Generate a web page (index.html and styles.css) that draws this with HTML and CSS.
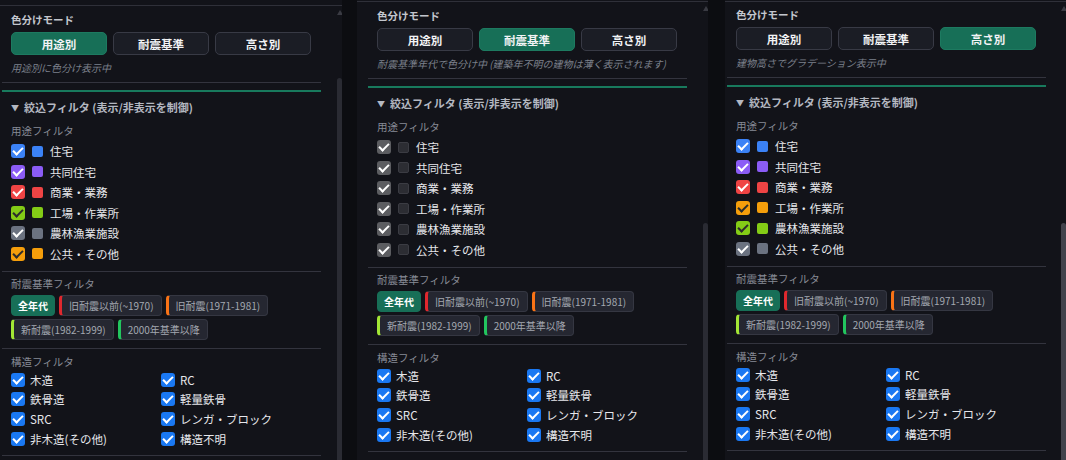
FILE: index.html
```html
<!DOCTYPE html>
<html lang="ja">
<head>
  <meta charset="UTF-8">
  <title>色分けモード</title>
  <link rel="stylesheet" href="styles.css">
</head>
<body>
  <div class="screens">

    <!-- 用途別 -->
    <div class="panel p1">
      <div class="topline"></div>
      <div class="scroll">
        <div class="body">
          <div class="inner">
            <div class="label">色分けモード</div>
            <div class="modes">
              <button class="mode active">用途別</button>
              <button class="mode">耐震基準</button>
              <button class="mode">高さ別</button>
            </div>
            <p class="hint">用途別に色分け表示中</p>
            <div class="rule"></div>
            <div class="accent"></div>
            <div class="summary"><span class="tri">▼</span>絞込フィルタ (表示/非表示を制御)</div>
            <div class="sub">用途フィルタ</div>
            <ul class="uses">
              <li><span class="cb c-blue"></span><span class="sw c-blue"></span>住宅</li>
              <li><span class="cb c-purple"></span><span class="sw c-purple"></span>共同住宅</li>
              <li><span class="cb c-red"></span><span class="sw c-red"></span>商業・業務</li>
              <li><span class="cb c-lime dark"></span><span class="sw c-lime"></span>工場・作業所</li>
              <li><span class="cb c-grey"></span><span class="sw c-grey"></span>農林漁業施設</li>
              <li><span class="cb c-orange dark"></span><span class="sw c-orange"></span>公共・その他</li>
            </ul>
            <div class="rule"></div>
            <div class="sub">耐震基準フィルタ</div>
            <div class="pills">
              <span class="pill all">全年代</span>
              <span class="pill b-red">旧耐震以前(~1970)</span>
              <span class="pill b-orange">旧耐震(1971-1981)</span>
              <span class="pill b-lime">新耐震(1982-1999)</span>
              <span class="pill b-green">2000年基準以降</span>
            </div>
            <div class="rule"></div>
            <div class="sub">構造フィルタ</div>
            <ul class="structs">
              <li><span class="cb c-acc"></span>木造</li>
              <li><span class="cb c-acc"></span>RC</li>
              <li><span class="cb c-acc"></span>鉄骨造</li>
              <li><span class="cb c-acc"></span>軽量鉄骨</li>
              <li><span class="cb c-acc"></span>SRC</li>
              <li><span class="cb c-acc"></span>レンガ・ブロック</li>
              <li><span class="cb c-acc"></span>非木造(その他)</li>
              <li><span class="cb c-acc"></span>構造不明</li>
            </ul>
            <div class="rule"></div>
          </div>
        </div>
        <div class="bar"><div class="arrow"></div><div class="thumb"></div></div>
      </div>
    </div>

    <!-- 耐震基準 -->
    <div class="panel p2">
      <div class="topline"></div>
      <div class="scroll">
        <div class="body">
          <div class="inner">
            <div class="label">色分けモード</div>
            <div class="modes">
              <button class="mode">用途別</button>
              <button class="mode active">耐震基準</button>
              <button class="mode">高さ別</button>
            </div>
            <p class="hint">耐震基準年代で色分け中 (建築年不明の建物は薄く表示されます)</p>
            <div class="rule"></div>
            <div class="accent"></div>
            <div class="summary"><span class="tri">▼</span>絞込フィルタ (表示/非表示を制御)</div>
            <div class="sub">用途フィルタ</div>
            <ul class="uses">
              <li><span class="cb c-muted"></span><span class="sw off"></span>住宅</li>
              <li><span class="cb c-muted"></span><span class="sw off"></span>共同住宅</li>
              <li><span class="cb c-muted"></span><span class="sw off"></span>商業・業務</li>
              <li><span class="cb c-muted"></span><span class="sw off"></span>工場・作業所</li>
              <li><span class="cb c-muted"></span><span class="sw off"></span>農林漁業施設</li>
              <li><span class="cb c-muted"></span><span class="sw off"></span>公共・その他</li>
            </ul>
            <div class="rule"></div>
            <div class="sub">耐震基準フィルタ</div>
            <div class="pills">
              <span class="pill all">全年代</span>
              <span class="pill b-red">旧耐震以前(~1970)</span>
              <span class="pill b-orange">旧耐震(1971-1981)</span>
              <span class="pill b-lime">新耐震(1982-1999)</span>
              <span class="pill b-green">2000年基準以降</span>
            </div>
            <div class="rule"></div>
            <div class="sub">構造フィルタ</div>
            <ul class="structs">
              <li><span class="cb c-acc"></span>木造</li>
              <li><span class="cb c-acc"></span>RC</li>
              <li><span class="cb c-acc"></span>鉄骨造</li>
              <li><span class="cb c-acc"></span>軽量鉄骨</li>
              <li><span class="cb c-acc"></span>SRC</li>
              <li><span class="cb c-acc"></span>レンガ・ブロック</li>
              <li><span class="cb c-acc"></span>非木造(その他)</li>
              <li><span class="cb c-acc"></span>構造不明</li>
            </ul>
            <div class="rule"></div>
          </div>
        </div>
        <div class="bar"><div class="arrow"></div><div class="thumb"></div></div>
      </div>
    </div>

    <!-- 高さ別 -->
    <div class="panel p3">
      <div class="topline"></div>
      <div class="scroll">
        <div class="body">
          <div class="inner">
            <div class="label">色分けモード</div>
            <div class="modes">
              <button class="mode">用途別</button>
              <button class="mode">耐震基準</button>
              <button class="mode active">高さ別</button>
            </div>
            <p class="hint">建物高さでグラデーション表示中</p>
            <div class="rule"></div>
            <div class="accent"></div>
            <div class="summary"><span class="tri">▼</span>絞込フィルタ (表示/非表示を制御)</div>
            <div class="sub">用途フィルタ</div>
            <ul class="uses">
              <li><span class="cb c-blue"></span><span class="sw c-blue"></span>住宅</li>
              <li><span class="cb c-purple"></span><span class="sw c-purple"></span>共同住宅</li>
              <li><span class="cb c-red"></span><span class="sw c-red"></span>商業・業務</li>
              <li><span class="cb c-orange dark"></span><span class="sw c-orange"></span>工場・作業所</li>
              <li><span class="cb c-lime dark"></span><span class="sw c-lime"></span>農林漁業施設</li>
              <li><span class="cb c-grey"></span><span class="sw c-grey"></span>公共・その他</li>
            </ul>
            <div class="rule"></div>
            <div class="sub">耐震基準フィルタ</div>
            <div class="pills">
              <span class="pill all">全年代</span>
              <span class="pill b-red">旧耐震以前(~1970)</span>
              <span class="pill b-orange">旧耐震(1971-1981)</span>
              <span class="pill b-lime">新耐震(1982-1999)</span>
              <span class="pill b-green">2000年基準以降</span>
            </div>
            <div class="rule"></div>
            <div class="sub">構造フィルタ</div>
            <ul class="structs">
              <li><span class="cb c-acc"></span>木造</li>
              <li><span class="cb c-acc"></span>RC</li>
              <li><span class="cb c-acc"></span>鉄骨造</li>
              <li><span class="cb c-acc"></span>軽量鉄骨</li>
              <li><span class="cb c-acc"></span>SRC</li>
              <li><span class="cb c-acc"></span>レンガ・ブロック</li>
              <li><span class="cb c-acc"></span>非木造(その他)</li>
              <li><span class="cb c-acc"></span>構造不明</li>
            </ul>
            <div class="rule"></div>
          </div>
        </div>
        <div class="bar"><div class="arrow"></div><div class="thumb"></div></div>
      </div>
    </div>

  </div>
</body>
</html>
```

FILE: styles.css
```css
* {
  box-sizing: border-box;
}

body {
  margin: 0;
  background-color: #0c0d11;
  font-family: "Noto Sans CJK JP", "Noto Sans", sans-serif;
  color: #e6e7eb;
  overflow: hidden;
}

.screens {
  display: flex;
  height: 460px;
}

.panel {
  display: flex;
  flex-direction: column;
  height: 460px;
  background-color: #121319;
  overflow: hidden;
}

.p1 {
  width: 342px;
  padding-top: 5px;
  margin-right: 15px;
}

.p2 {
  width: 351px;
  padding-top: 1px;
  margin-right: 17px;
}

.p3 {
  width: 341px;
  padding-top: 1px;
}

.topline {
  height: 1px;
  flex-shrink: 0;
  background-color: #2f3039;
}

.scroll {
  display: flex;
  flex: 1;
  min-height: 0;
}

.body {
  flex: 1;
  padding-left: 2px;
}

.p2 .body {
  padding-left: 11px;
}

.inner {
  width: 319px;
}

/* scrollbar */
.bar {
  display: flex;
  flex-direction: column;
  align-items: center;
  width: 5px;
}

.arrow {
  margin-top: 4px;
  border-left: 3px solid transparent;
  border-right: 3px solid transparent;
  border-bottom: 5px solid #3a3b43;
}

.thumb {
  flex: 1;
  width: 5px;
  margin-top: 63px;
  border-radius: 3px 3px 0 0;
  background-color: #2a2b33;
}

.p2 .thumb,
.p3 .thumb {
  margin-top: 212px;
}

.p3 .thumb {
  background-color: #42434c;
}

/* mode buttons */
.label {
  margin: 6px 0 0 9px;
  font-size: 10.5px;
  line-height: 16px;
  font-weight: bold;
  color: #c3c6cd;
}

.p3 .label {
  margin-top: 5px;
}

.modes {
  display: flex;
  gap: 6px;
  width: 300px;
  margin: 4px 0 0 9px;
}

.mode {
  flex: 1;
  height: 23px;
  padding: 0;
  border: 1px solid #383a45;
  border-radius: 5px;
  background-color: #1b1d25;
  color: #f2f3f5;
  font-family: inherit;
  font-size: 11.5px;
  font-weight: bold;
}

.mode.active {
  background-color: #176f57;
  border-color: #1d7a60;
}

.hint {
  margin: 6px 0 0 9px;
  font-size: 10px;
  line-height: 14px;
  font-style: italic;
  color: #7c818c;
  white-space: nowrap;
}

.rule {
  height: 1px;
  background-color: #33343e;
  margin-top: 7px;
}

.accent {
  height: 2px;
  margin-top: 7px;
  background-color: #187a5d;
}

.summary {
  height: 16px;
  margin: 7px 0 0 9px;
  font-size: 11px;
  line-height: 16px;
  font-weight: bold;
  color: #b4b8c1;
}

.tri {
  display: inline-block;
  margin-right: 5px;
  font-size: 8px;
  line-height: 1;
  vertical-align: 1px;
}

.sub {
  margin: 9px 0 0 9px;
  font-size: 10.5px;
  line-height: 14px;
  color: #878b96;
}

.rule + .sub {
  margin-top: 5px;
}

.pills + .rule + .sub {
  margin-top: 6px;
}

/* checkbox lists */
ul {
  list-style: none;
  margin: 0;
  padding: 0 0 0 9px;
}

.uses {
  margin-top: 3px;
}

.uses li {
  display: flex;
  align-items: center;
  height: 20.5px;
  font-size: 11.5px;
}

.structs {
  display: grid;
  grid-template-columns: 150px 1fr;
  margin-top: 1px;
}

.structs li {
  display: flex;
  align-items: center;
  height: 19.6px;
  font-size: 11.5px;
}

.structs + .rule {
  margin-top: 6.6px;
}

.cb {
  display: flex;
  align-items: center;
  justify-content: center;
  width: 14px;
  height: 14px;
  margin-right: 7px;
  border-radius: 3px;
}

.cb::after {
  content: "";
  width: 4px;
  height: 8px;
  margin-top: -2px;
  border: solid #fff;
  border-width: 0 2px 2px 0;
  transform: rotate(45deg);
}

.cb.dark::after {
  border-color: #2c2c2c;
}

.structs .cb {
  margin-right: 5px;
}

.sw {
  width: 11px;
  height: 11px;
  margin-right: 7px;
  border-radius: 2px;
}

.sw.off {
  background-color: #2c2d33;
  border: 1px solid #3b3c43;
}

.c-blue { background-color: #3b82f6; }
.c-purple { background-color: #8b5cf6; }
.c-red { background-color: #ef4444; }
.c-lime { background-color: #84cc16; }
.c-grey { background-color: #6b7280; }
.c-orange { background-color: #f59e0b; }
.c-muted { background-color: #5c5d61; }
.c-acc { background-color: #1a78f2; }

/* era pills */
.pills {
  display: flex;
  flex-wrap: wrap;
  gap: 3px 4px;
  width: 300px;
  margin: 4px 0 0 9px;
}

.pill {
  height: 21px;
  padding: 0 7px;
  border: 1px solid #353742;
  border-radius: 4px;
  background-color: #252731;
  color: #a3a7b0;
  font-size: 10px;
  line-height: 19px;
  white-space: nowrap;
}

.pill.all {
  padding: 0 6px;
  border-color: #176f57;
  background-color: #176f57;
  color: #fff;
  font-weight: bold;
}

.b-red { border-left: 3px solid #e0282e; }
.b-orange { border-left: 3px solid #f97316; }
.b-lime { border-left: 3px solid #a3e635; }
.b-green { border-left: 3px solid #22c55e; }

.pills + .rule {
  margin-top: 8px;
}
```
